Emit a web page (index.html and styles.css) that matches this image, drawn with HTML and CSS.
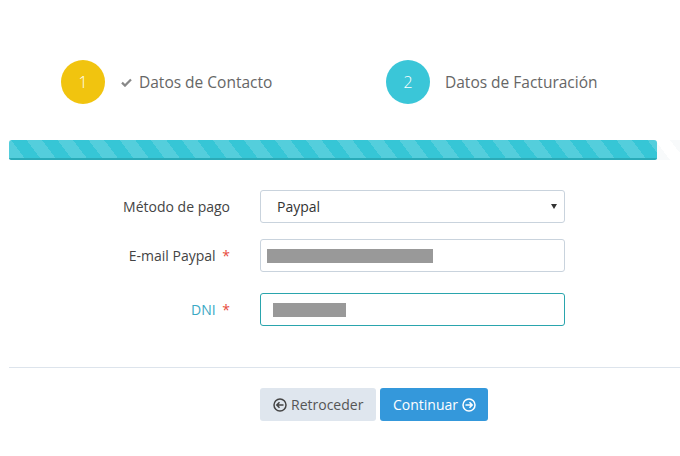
FILE: index.html
```html
<!DOCTYPE html>
<html lang="es">
<head>
    <meta charset="UTF-8">
    <title>Datos de Facturación</title>
    <link rel="stylesheet" href="styles.css">
</head>
<body>
    <div class="wizard">
        <div class="steps">
            <div class="step done">
                <span class="step-num">1</span>
                <span class="step-title">
                    <svg class="check" width="11" height="9" viewBox="0 0 11 9"><path d="M1 4.6l3 3L10 1.5" fill="none" stroke="#888" stroke-width="2.2"/></svg>
                    Datos de Contacto
                </span>
            </div>
            <div class="step active">
                <span class="step-num">2</span>
                <span class="step-title">Datos de Facturación</span>
            </div>
        </div>

        <div class="progress">
            <div class="progress-bar"></div>
        </div>

        <form class="form">
            <div class="form-row">
                <label class="form-label">Método de pago</label>
                <div class="select-wrap">
                    <select class="form-control">
                        <option>Paypal</option>
                    </select>
                </div>
            </div>
            <div class="form-row">
                <label class="form-label">E-mail Paypal <span class="req">*</span></label>
                <div class="form-control field"><span class="redacted email"></span></div>
            </div>
            <div class="form-row focused">
                <label class="form-label">DNI <span class="req">*</span></label>
                <div class="form-control field"><span class="redacted dni"></span></div>
            </div>
        </form>

        <hr class="divider">

        <div class="actions">
            <button class="btn btn-back">
                <svg width="14" height="14" viewBox="0 0 14 14"><circle cx="7" cy="7" r="6" fill="none" stroke="#444" stroke-width="1.5"/><path d="M10.5 7H4M6.5 4.2L3.8 7l2.7 2.8" fill="none" stroke="#444" stroke-width="1.5"/></svg>
                Retroceder
            </button>
            <button class="btn btn-next">
                Continuar
                <svg width="14" height="14" viewBox="0 0 14 14"><circle cx="7" cy="7" r="6" fill="none" stroke="#fff" stroke-width="1.5"/><path d="M3.5 7H10M7.5 4.2L10.2 7l-2.7 2.8" fill="none" stroke="#fff" stroke-width="1.5"/></svg>
            </button>
        </div>
    </div>
</body>
</html>
```

FILE: styles.css
```css
* {
    margin: 0;
    padding: 0;
    box-sizing: border-box;
}

body {
    font-family: 'Open Sans', 'DejaVu Sans', sans-serif;
    background: #fff;
    color: #555;
}

.wizard {
    padding: 60px 0 0 9px;
}

.steps {
    display: flex;
    height: 44px;
    margin-bottom: 36px;
}

.step {
    display: flex;
    align-items: center;
}

.step.done {
    margin-left: 52px;
    width: 325px;
}

.step-num {
    width: 44px;
    height: 44px;
    border-radius: 50%;
    display: flex;
    align-items: center;
    justify-content: center;
    color: #fff;
    font-size: 16px;
    font-weight: 300;
}

.done .step-num {
    background: #f1c40f;
}

.active .step-num {
    background: #3ac6d8;
}

.step-title {
    font-size: 15.5px;
    color: #666;
    display: flex;
    align-items: center;
}

.done .step-title {
    margin-left: 16px;
}

.active .step-title {
    margin-left: 15px;
}

.check {
    margin-right: 7px;
    margin-top: 1px;
}

.progress {
    height: 20px;
    width: 671px;
    background: repeating-linear-gradient(53deg, #fff 0, #fff 12px, #f8fafb 12px, #f8fafb 24px);
}

.progress-bar {
    width: 648px;
    height: 20px;
    border-radius: 3px 3px 2px 2px;
    border-bottom: 2px solid #2aabb8;
    background-color: #36c6d6;
    background-image: repeating-linear-gradient(53deg, rgba(255,255,255,0.15) 0, rgba(255,255,255,0.15) 12.4px, transparent 12.4px, transparent 24.8px);
}

.form {
    margin-top: 30px;
}

.form-row {
    display: flex;
    align-items: center;
    margin-bottom: 16px;
}

.form-row.focused {
    margin-top: 21px;
}

.form-label {
    width: 221px;
    text-align: right;
    font-size: 14px;
    color: #444;
    margin-right: 30px;
}

.req {
    color: #e74c3c;
    margin-left: 3px;
}

.focused .form-label {
    color: #3aa8c4;
}

.select-wrap {
    position: relative;
    width: 305px;
}

.select-wrap::after {
    content: "";
    position: absolute;
    right: 8px;
    top: 14px;
    border-left: 3px solid transparent;
    border-right: 3px solid transparent;
    border-top: 5px solid #333;
}

.form-control {
    width: 305px;
    height: 33px;
    border: 1px solid #c9d3dd;
    border-radius: 3px;
    background: #fff;
    font-family: inherit;
    font-size: 14px;
    color: #333;
}

select.form-control {
    appearance: none;
    -webkit-appearance: none;
    padding-left: 16px;
    outline: none;
}

.field {
    display: flex;
    align-items: center;
}

.focused .form-control {
    border-color: #2aa5ad;
}

.redacted {
    display: block;
    height: 14px;
    background: #999;
}

.redacted.email {
    width: 166px;
    margin-left: 6px;
}

.redacted.dni {
    width: 73px;
    margin-left: 12px;
}

.divider {
    border: none;
    border-top: 1px solid #dde4ec;
    margin-top: 41px;
    width: 671px;
}

.actions {
    display: flex;
    gap: 4px;
    margin: 20px 0 0 251px;
}

.btn {
    height: 33px;
    border: none;
    border-radius: 3px;
    font-family: inherit;
    font-size: 14px;
    display: inline-flex;
    align-items: center;
    gap: 4px;
    cursor: pointer;
}

.btn-back {
    width: 116px;
    padding-left: 13px;
    background: #dfe6ee;
    color: #555;
}

.btn-next {
    width: 108px;
    padding-left: 13px;
    background: #3498db;
    color: #fff;
}
```
